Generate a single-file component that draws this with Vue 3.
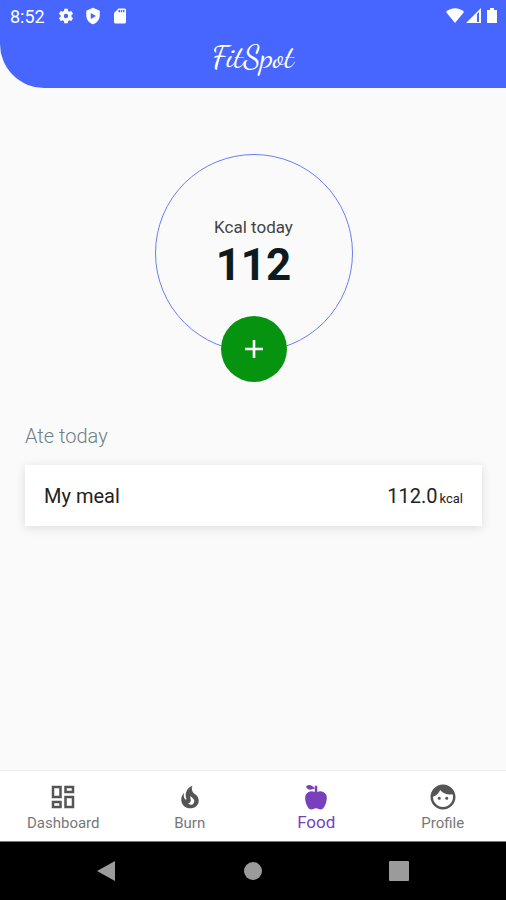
<script setup>
import { ref, computed } from "vue";

const meals = ref([{ id: 1, name: "My meal", kcal: 112 }]);
const activeTab = ref("Food");

const totalKcal = computed(() => meals.value.reduce((sum, m) => sum + m.kcal, 0));

const tabs = [
  {
    name: "Dashboard",
    icon: "M19 5v2h-4V5h4M9 5v6H5V5h4m10 8v6h-4v-6h4M9 17v2H5v-2h4M21 3h-8v6h8V3zM11 3H3v10h8V3zm10 8h-8v10h8V11zm-10 4H3v6h8v-6z",
  },
  {
    name: "Burn",
    icon: "M17.66 11.2c-.23-.3-.51-.56-.77-.82-.67-.6-1.43-1.03-2.07-1.66C13.33 7.26 13 4.85 13.95 3c-.95.23-1.78.75-2.49 1.32-2.59 2.08-3.61 5.75-2.39 8.9.04.1.08.2.08.33 0 .22-.15.42-.35.5-.23.1-.47.04-.66-.12a.58.58 0 0 1-.14-.17c-1.13-1.43-1.31-3.48-.55-5.12C5.78 10 4.87 12.3 5 14.47c.06.5.12 1 .29 1.5.14.6.41 1.2.71 1.73 1.08 1.73 2.95 2.97 4.96 3.22 2.14.27 4.43-.12 6.07-1.6 1.83-1.66 2.47-4.32 1.53-6.6l-.13-.26c-.21-.46-.77-1.26-.77-1.26m-3.16 6.3c-.28.24-.74.5-1.1.6-1.12.4-2.24-.16-2.9-.82 1.19-.28 1.9-1.16 2.11-2.05.17-.8-.15-1.46-.28-2.23-.12-.74-.1-1.37.17-2.06.19.38.39.76.63 1.06.77 1 1.98 1.44 2.24 2.8.04.14.06.28.06.43.03.82-.33 1.72-.93 2.27z",
  },
  {
    name: "Food",
    icon: "M20 10c2 3-1 12-4 12-2 0-2-1-4-1s-2 1-4 1c-3 0-6-9-4-12s5-3 7-2V5C5.38 8.07 4.11 3.78 4.11 3.78S6.77.19 11 5V3h2v5c2-1 5-1 7 2z",
  },
  {
    name: "Profile",
    icon: "M10.25 13a1.25 1.25 0 1 1-2.5 0 1.25 1.25 0 0 1 2.5 0zM15 11.75a1.25 1.25 0 1 0 0 2.5 1.25 1.25 0 0 0 0-2.5zM22 12c0 5.52-4.48 10-10 10S2 17.52 2 12 6.48 2 12 2s10 4.48 10 10zm-2 0c0-.78-.12-1.53-.33-2.24-.7.15-1.42.24-2.17.24-3.13 0-5.92-1.44-7.76-3.69C8.69 8.87 6.6 10.88 4 11.86c.01.04 0 .09 0 .14 0 4.41 3.59 8 8 8s8-3.59 8-8z",
  },
];
</script>

<template>
  <div class="screen">
    <header class="header">
      <div class="status-bar">
        <span class="clock">8:52</span>
        <svg class="status-icon" viewBox="0 0 24 24">
          <path d="M19.14 12.94c.04-.3.06-.61.06-.94 0-.32-.02-.64-.07-.94l2.03-1.58c.18-.14.23-.41.12-.61l-1.92-3.32c-.12-.22-.37-.29-.59-.22l-2.39.96c-.5-.38-1.03-.7-1.62-.94l-.36-2.54c-.04-.24-.24-.41-.48-.41h-3.84c-.24 0-.43.17-.47.41l-.36 2.54c-.59.24-1.13.57-1.62.94l-2.39-.96c-.22-.08-.47 0-.59.22L2.74 8.87c-.12.21-.08.47.12.61l2.03 1.58c-.05.3-.09.63-.09.94s.02.64.07.94l-2.03 1.58c-.18.14-.23.41-.12.61l1.92 3.32c.12.22.37.29.59.22l2.39-.96c.5.38 1.03.7 1.62.94l.36 2.54c.05.24.24.41.48.41h3.84c.24 0 .44-.17.47-.41l.36-2.54c.59-.24 1.13-.56 1.62-.94l2.39.96c.22.08.47 0 .59-.22l1.92-3.32c.12-.22.07-.47-.12-.61l-2.01-1.58zM12 15a3 3 0 1 1 0-6 3 3 0 0 1 0 6z" />
        </svg>
        <svg class="status-icon" viewBox="0 0 24 24">
          <path fill-rule="evenodd" d="M12 1L3 5v6c0 5.55 3.84 10.74 9 12 5.16-1.26 9-6.45 9-12V5l-9-4zM9 8l7 4-7 4z" />
        </svg>
        <svg class="status-icon" viewBox="0 0 24 24">
          <path d="M18 2h-8L4 8v12c0 1.1.9 2 2 2h12c1.1 0 2-.9 2-2V4c0-1.1-.9-2-2-2zm-6 5h-2V4h2v3zm3 0h-2V4h2v3zm3 0h-2V4h2v3z" />
        </svg>
        <div class="signals">
          <svg width="20" height="18" viewBox="0 0 20 18">
            <path d="M10 16L1 5c5-5 13-5 18 0z" />
          </svg>
          <svg width="18" height="18" viewBox="0 0 18 18">
            <path fill-rule="evenodd" d="M16 1v15H1zM12 7v8h2V5z" />
          </svg>
          <svg width="18" height="18" viewBox="0 0 18 18">
            <path d="M7 3V1h4v2h3v13H4V3z" />
          </svg>
        </div>
      </div>
      <h1 class="logo">FitSpot</h1>
    </header>

    <main class="content">
      <div class="counter">
        <span class="counter-label">Kcal today</span>
        <strong class="counter-value">{{ totalKcal }}</strong>
        <button class="add-btn" type="button" aria-label="Add meal">
          <svg width="20" height="20" viewBox="0 0 20 20">
            <path d="M8.700 1h2.600v7.700H19v2.600h-7.700V19H8.700v-7.700H1V8.700h7.700z" />
          </svg>
        </button>
      </div>

      <h2 class="section-title">Ate today</h2>
      <div v-for="m in meals" :key="m.id" class="meal-card">
        <span>{{ m.name }}</span>
        <span>{{ m.kcal.toFixed(1) }}<small>kcal</small></span>
      </div>
    </main>

    <nav class="tabs">
      <button
        v-for="t in tabs"
        :key="t.name"
        type="button"
        class="tab"
        :class="{ active: activeTab === t.name }"
        @click="activeTab = t.name"
      >
        <svg width="30" height="30" viewBox="0 0 24 24"><path :d="t.icon" /></svg>
        <span>{{ t.name }}</span>
      </button>
    </nav>

    <!-- Android navigation -->
    <div class="system-nav">
      <button type="button" aria-label="Back">
        <svg width="22" height="22" viewBox="0 0 22 22"><path d="M19 1v20L1 11z" /></svg>
      </button>
      <button type="button" aria-label="Home">
        <svg width="22" height="22" viewBox="0 0 22 22"><circle cx="11" cy="11" r="9" /></svg>
      </button>
      <button type="button" aria-label="Recent apps">
        <svg width="22" height="22" viewBox="0 0 22 22"><rect x="1" y="1" width="20" height="20" rx="1" /></svg>
      </button>
    </div>
  </div>
</template>

<style>
body {
  margin: 0;
  background: #fafafa;
}
</style>

<style scoped>
.screen {
  display: flex;
  flex-direction: column;
  min-height: 100vh;
  font-family: Roboto, sans-serif;
  color: #222;
}

button {
  padding: 0;
  border: 0;
  background: none;
  font-family: inherit;
  cursor: pointer;
}

svg {
  display: block;
  fill: currentColor;
}

/* HEADER */
.header {
  height: 88px;
  background: #4766ff;
  color: #fff;
  border-bottom-left-radius: 44px;
}

.status-bar {
  display: flex;
  align-items: center;
  gap: 9px;
  height: 32px;
  padding: 0 5px 0 10px;
}

.clock {
  margin-right: 3px;
  font-size: 18px;
}

.status-icon {
  width: 18px;
  height: 18px;
}

.signals {
  display: flex;
  margin-left: auto;
}

.logo {
  margin: 4px 0 0;
  text-align: center;
  font-family: "Dancing Script", cursive;
  font-size: 32px;
  font-weight: 400;
  line-height: 42px;
}

/* CONTENT */
.content {
  flex: 1;
  padding: 66px 24px 24px 25px;
}

.counter {
  position: relative;
  display: flex;
  flex-direction: column;
  align-items: center;
  box-sizing: border-box;
  width: 198px;
  height: 198px;
  margin: 0 auto;
  padding-top: 61px;
  border: 1px solid #6680f5;
  border-radius: 50%;
}

.counter-label {
  font-size: 17px;
  line-height: 22px;
  color: #444;
}

.counter-value {
  font-size: 44px;
  line-height: 54px;
  color: #0d1a1e;
}

.add-btn {
  position: absolute;
  bottom: -31px;
  left: 50%;
  display: grid;
  place-items: center;
  width: 66px;
  height: 66px;
  margin-left: -33px;
  border-radius: 50%;
  background: #06930f;
  color: #fff;
}

.section-title {
  margin: 73px 0 18px;
  font-size: 20px;
  font-weight: 300;
  line-height: 22px;
  color: #6f7f87;
}

.meal-card {
  display: flex;
  justify-content: space-between;
  padding: 19px 19px 18px;
  background: #fff;
  box-shadow: 0 2px 10px rgba(0, 0, 0, 0.12);
  font-size: 20px;
  line-height: 24px;
}

.meal-card small {
  margin-left: 2px;
  font-size: 13px;
  line-height: 1;
}

/* TAB BAR */
.tabs {
  display: grid;
  grid-template-columns: repeat(4, 1fr);
  border-top: 1px solid #eee;
  background: #fff;
}

.tab {
  display: flex;
  flex-direction: column;
  align-items: center;
  height: 70px;
  padding-top: 11px;
  color: #555;
}

.tab span {
  font-size: 15px;
  line-height: 22px;
  color: #777;
}

.tab.active,
.tab.active span {
  color: #7840bd;
}

.tab.active span {
  font-size: 17px;
  line-height: 20px;
}

/* ANDROID NAV */
.system-nav {
  display: flex;
  justify-content: center;
  gap: 124px;
  padding: 18px 0;
  border-top: 1px solid #777;
  background: #000;
}

.system-nav button {
  color: #9b9b9b;
}
</style>
